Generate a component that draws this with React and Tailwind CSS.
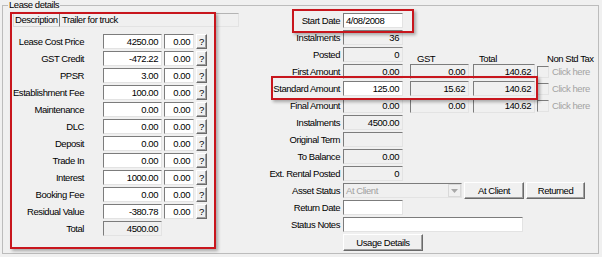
import React from 'react'

const sunken = "border border-t-[#7c7c7c] border-l-[#7c7c7c] border-b-[#e3e3e3] border-r-[#e3e3e3]"
const raised = "border border-t-[#ffffff] border-l-[#ffffff] border-b-[#6a6a6a] border-r-[#6a6a6a] shadow-[inset_-1px_-1px_0_#a0a0a0] bg-[#f0f0f0]"

const Field = ({ value, white, left, className }) => (
    <div className={`h-[15px] shrink-0 flex items-center overflow-hidden whitespace-nowrap ${left ? "justify-start pl-[2px]" : "justify-end pr-[3px]"} ${sunken} ${white ? "bg-white" : "bg-[#f0f0f0]"} ${className}`}>
        {value}
    </div>
)

const Btn = ({ children, className }) => (
    <div className={`flex items-center justify-center shrink-0 ${raised} ${className}`}>{children}</div>
)

const leftRows = [
    ['Lease Cost Price', '4250.00'],
    ['GST Credit', '-472.22'],
    ['PPSR', '3.00'],
    ['Establishment Fee', '100.00'],
    ['Maintenance', '0.00'],
    ['DLC', '0.00'],
    ['Deposit', '0.00'],
    ['Trade In', '0.00'],
    ['Interest', '1000.00'],
    ['Booking Fee', '0.00'],
    ['Residual Value', '-380.78'],
]

const amountRows = [
    ['First Amount', '0.00', '0.00', '140.62', false],
    ['Standard Amount', '125.00', '15.62', '140.62', true],
    ['Final Amount', '0.00', '0.00', '140.62', false],
]

const simpleRows = [
    ['Instalments', '4500.00'],
    ['Original Term', ''],
    ['To Balance', '0.00'],
    ['Ext. Rental Posted', '0'],
]

const Label = ({ children }) => (
    <div className="w-[126px] shrink-0 text-right whitespace-nowrap mr-[3px]">{children}</div>
)

const LeftPanel = () => (
    <div className="w-[202px] shrink-0 flex flex-col">
        {/* description */}
        <div className="flex h-[14px] ml-[1px]">
            <div className="w-[46px] h-[14px] shrink-0 border border-[#d6d6d6] border-r-0 flex items-center pl-[1px] whitespace-nowrap">Description</div>
            <Field value="Trailer for truck" left className="w-[180px] !h-[14px] border-t-[#b4b4b4] border-l-[#7c7c7c]" />
        </div>
        <div className="flex flex-col gap-[2px] mt-[7px]">
            {leftRows.map(([label, v]) => (
                <div key={label} className="flex items-center h-[15px]">
                    <div className="w-[72px] shrink-0 text-right whitespace-nowrap mr-[19px]">{label}</div>
                    <Field value={v} white className="w-[59px]" />
                    <Field value="0.00" white className="w-[30px] ml-[2px]" />
                    <Btn className="w-[11px] h-[15px] ml-[2px]">?</Btn>
                </div>
            ))}
            <div className="flex items-center h-[15px]">
                <div className="w-[72px] shrink-0 text-right mr-[19px]">Total</div>
                <Field value="4500.00" className="w-[59px]" />
            </div>
        </div>
    </div>
)

const RightPanel = () => (
    <div className="flex flex-col gap-[2px]">
        <div className="flex items-center h-[15px]">
            <Label>Start Date</Label>
            <Field value="4/08/2008" white left className="w-[60px]" />
        </div>
        <div className="flex items-center h-[15px]">
            <Label>Instalments</Label>
            <Field value="36" className="w-[60px]" />
        </div>
        <div className="flex items-center h-[15px]">
            <Label>Posted</Label>
            <Field value="0" className="w-[60px]" />
            <div className="flex self-end leading-[10px] mb-[-2px]">
                <div className="w-[59px] ml-[7px] pl-[7px]">GST</div>
                <div className="w-[62px] ml-[4px] pl-[6px]">Total</div>
                <div className="ml-[12px] whitespace-nowrap">Non Std Tax</div>
            </div>
        </div>
        {amountRows.map(([label, a, gst, total, white]) => (
            <div key={label} className="flex items-center h-[15px]">
                <Label>{label}</Label>
                <Field value={a} white={white} className="w-[60px]" />
                <Field value={gst} className="w-[59px] ml-[7px]" />
                <Field value={total} className="w-[62px] ml-[4px]" />
                <div className={`w-[12px] h-[12px] ml-[2px] shrink-0 bg-[#f0f0f0] ${sunken}`} />
                <div className="ml-[3px] text-[#a3a3a3] whitespace-nowrap">Click here</div>
            </div>
        ))}
        {simpleRows.map(([label, v]) => (
            <div key={label} className="flex items-center h-[15px]">
                <Label>{label}</Label>
                <Field value={v} className="w-[60px]" />
            </div>
        ))}
        <div className="flex items-center h-[15px]">
            <Label>Asset Status</Label>
            <div className={`w-[119px] h-[15px] shrink-0 flex items-center bg-[#f0f0f0] ${sunken}`}>
                <div className="flex-1 pl-[2px] text-[#a0a0a0]">At Client</div>
                <div className="w-[13px] h-[13px] flex items-center justify-center border border-[#d9d9d9] bg-[#f0f0f0]">
                    <svg width="7" height="4" viewBox="0 0 7 4"><path d="M0 0h7L3.5 4z" fill="#a8a8a8" /></svg>
                </div>
            </div>
            <Btn className="w-[60px] h-[17px] ml-[2px]">At Client</Btn>
            <Btn className="w-[59px] h-[17px] ml-[2px]">Returned</Btn>
        </div>
        <div className="flex items-center h-[15px]">
            <Label>Return Date</Label>
            <Field value="" white className="w-[60px]" />
        </div>
        <div className="flex items-center h-[15px]">
            <Label>Status Notes</Label>
            <Field value="" white className="w-[180px]" />
        </div>
        <div className="flex items-start h-[17px]">
            <div className="w-[129px] shrink-0" />
            <Btn className="w-[80px] h-[17px]">Usage Details</Btn>
        </div>
    </div>
)

const redBox = "absolute pointer-events-none border-2 border-[#c8161d] shadow-[2px_2px_3px_rgba(0,0,0,0.3)]"

export default function App() {
    return (
        <div className="relative w-[602px] h-[257px] overflow-hidden bg-[#f0f0f0] text-black text-[9.5px] leading-[12px] tracking-[-0.45px] font-['Liberation_Sans',Arial,sans-serif]">
            <div className="relative mt-[5px] ml-[2px] w-[597px] h-[249px] border border-[#bcbcbc]">
                <span className="absolute left-[5px] -top-[7px] px-[1px] bg-[#f0f0f0]">Lease details</span>
                <div className="flex pl-[9px] pt-[7px]">
                    <LeftPanel />
                    <RightPanel />
                </div>
            </div>

            {/* highlight frames */}
            <div className={`${redBox} left-[10px] top-[12px] w-[206px] h-[237px]`} />
            <div className={`${redBox} left-[292px] top-[9px] w-[122px] h-[24px]`} />
            <div className={`${redBox} left-[271px] top-[76px] w-[267px] h-[24px]`} />
        </div>
    )
}
